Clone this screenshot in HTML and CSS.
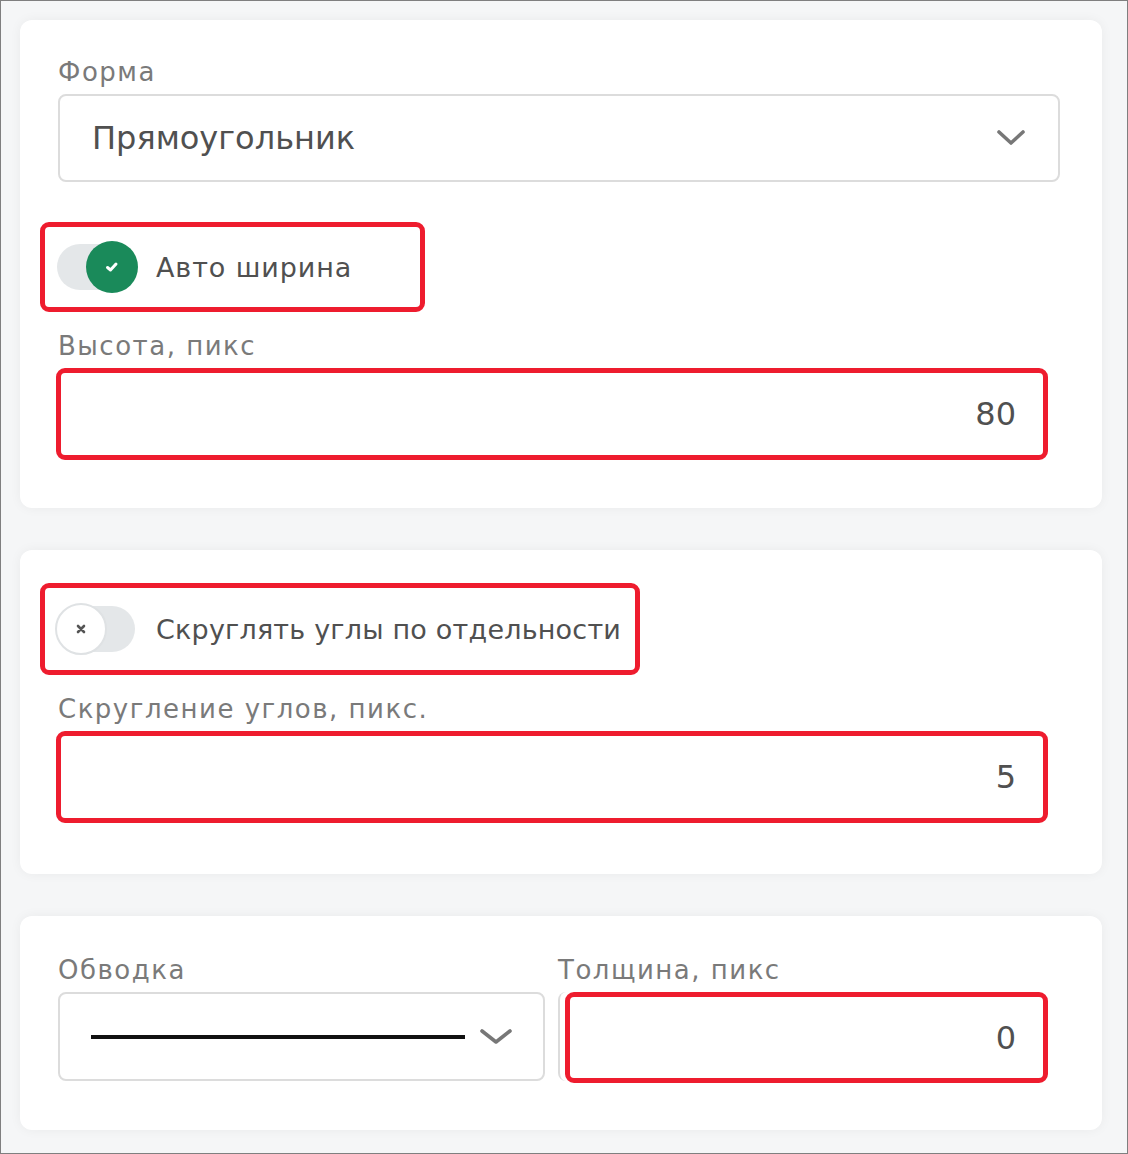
FILE: index.html
```html
<!DOCTYPE html>
<html lang="ru">

<head>
    <meta charset="UTF-8">
    <meta name="viewport" content="width=device-width, initial-scale=1.0">
    <title>Фигура</title>
    <link rel="stylesheet" href="styles.css">
</head>

<body>
    <div class="screen">
        <div class="card card-shape">
            <div class="field-label">Форма</div>
            <div class="select select-wide">
                <span class="select-value">Прямоугольник</span>
                <svg class="chevron" width="30" height="18" viewBox="0 0 30 18">
                    <path d="M3 3 L15 14 L27 3" fill="none" stroke="#777" stroke-width="3.6" stroke-linecap="round" stroke-linejoin="round"/>
                </svg>
            </div>

            <div class="marked toggle-row toggle-auto">
                <div class="toggle on">
                    <div class="knob">
                        <svg width="16" height="14" viewBox="0 0 16 14">
                            <path d="M3.5 7.5 L6.5 10 L12 4" fill="none" stroke="#fff" stroke-width="3" stroke-linecap="round" stroke-linejoin="round"/>
                        </svg>
                    </div>
                </div>
                <span class="toggle-text">Авто ширина</span>
            </div>

            <div class="field-label label-gap">Высота, пикс</div>
            <div class="marked number-input">80</div>
        </div>

        <div class="card card-corners">
            <div class="marked toggle-row toggle-sep">
                <div class="toggle off">
                    <div class="knob">
                        <svg width="12" height="12" viewBox="0 0 12 12">
                            <path d="M3 3 L9 9 M9 3 L3 9" fill="none" stroke="#555" stroke-width="2.6" stroke-linecap="round"/>
                        </svg>
                    </div>
                </div>
                <span class="toggle-text">Скруглять углы по отдельности</span>
            </div>

            <div class="field-label label-gap">Скругление углов, пикс.</div>
            <div class="marked number-input">5</div>
        </div>

        <div class="card card-stroke">
            <div class="stroke-grid">
                <div class="stroke-col">
                    <div class="field-label">Обводка</div>
                    <div class="select select-stroke">
                        <span class="stroke-line"></span>
                        <svg class="chevron" width="34" height="18" viewBox="0 0 34 18">
                            <path d="M3 3 L17 14 L31 3" fill="none" stroke="#777" stroke-width="3.6" stroke-linecap="round" stroke-linejoin="round"/>
                        </svg>
                    </div>
                </div>
                <div class="stroke-col">
                    <div class="field-label">Толщина, пикс</div>
                    <div class="thickness-wrap">
                        <div class="marked number-input thickness">0</div>
                    </div>
                </div>
            </div>
        </div>
    </div>
</body>

</html>
```

FILE: styles.css
```css
body {
    margin: 0;
    padding: 0;
    font-family: 'DejaVu Sans', sans-serif;
    color: #555;
}

.screen {
    box-sizing: border-box;
    width: 1128px;
    height: 1154px;
    border: 1px solid #7f7f7f;
    background-color: #f5f6f7;
    padding: 19px 25px 0 19px;
    display: flex;
    flex-direction: column;
    gap: 42px;
}

.card {
    background-color: #fff;
    border-radius: 12px;
    box-shadow: 0 0 12px rgba(0, 0, 0, 0.05);
    padding: 0 42px 0 38px;
    box-sizing: border-box;
}

.card-shape {
    height: 488px;
    padding-top: 37px;
}

.card-corners {
    height: 324px;
    padding-top: 33px;
}

.card-stroke {
    height: 214px;
    padding-top: 39px;
}

.field-label {
    font-size: 26px;
    line-height: 30px;
    letter-spacing: 1.5px;
    color: #7a7a7a;
    margin-bottom: 7px;
}

.label-gap {
    margin-top: 19px;
}

.select {
    box-sizing: border-box;
    height: 88px;
    border: 2px solid #dcdcdc;
    border-radius: 8px;
    display: flex;
    align-items: center;
    justify-content: space-between;
}

.select-wide {
    padding: 0 32px 0 32px;
}

.select-value {
    font-size: 32px;
    color: #505050;
}

/* red annotation frames */
.marked {
    box-sizing: border-box;
    border: 5px solid #ee1c2e;
    border-radius: 9px;
}

.toggle-row {
    display: flex;
    align-items: center;
    gap: 21px;
    height: 90px;
    margin-left: -18px;
    padding-left: 12px;
}

.toggle-auto {
    width: 385px;
    margin-top: 40px;
}

.toggle-sep {
    width: 600px;
    height: 92px;
}

.toggle {
    position: relative;
    width: 78px;
    height: 46px;
    border-radius: 23px;
    background-color: #e4e7e9;
}

.toggle .knob {
    position: absolute;
    top: -3px;
    width: 52px;
    height: 52px;
    border-radius: 50%;
    display: flex;
    align-items: center;
    justify-content: center;
    box-sizing: border-box;
}

.toggle.on .knob {
    right: -3px;
    background-color: #1a8a5a;
}

.toggle.off .knob {
    left: -2px;
    background-color: #fff;
    border: 2px solid #dfe2e4;
}

.toggle-text {
    font-size: 27px;
    letter-spacing: 0.9px;
    color: #505050;
}

.toggle-sep .toggle-text {
    letter-spacing: 0.2px;
}

.number-input {
    height: 92px;
    margin-left: -2px;
    margin-right: 12px;
    display: flex;
    align-items: center;
    justify-content: flex-end;
    padding-right: 27px;
    font-size: 32px;
    color: #505050;
}

.stroke-grid {
    display: grid;
    grid-template-columns: 487px 1fr;
    gap: 13px;
}

.select-stroke {
    height: 89px;
    padding: 0 30px 0 31px;
    gap: 14px;
}

.stroke-line {
    flex: 1;
    height: 4px;
    background-color: #111;
}

.thickness-wrap {
    box-sizing: border-box;
    height: 89px;
    border-left: 2px solid #dcdcdc;
    border-radius: 8px 0 0 8px;
    padding-left: 5px;
}

.number-input.thickness {
    height: 91px;
    margin: 1px 12px 0 0;
}
```
